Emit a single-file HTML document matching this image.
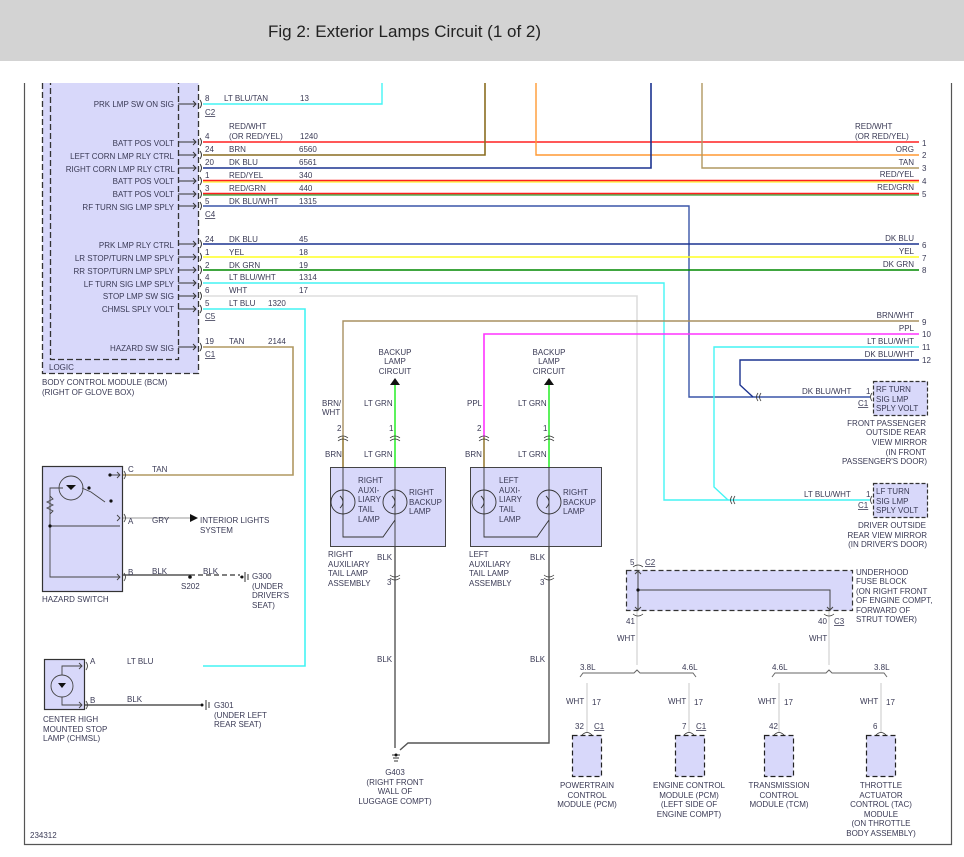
<!DOCTYPE html>
<html><head><meta charset="utf-8"><style>
html,body{margin:0;padding:0;background:#fff;}
svg{display:block;}
text{font-family:"Liberation Sans",sans-serif;font-size:8px;fill:#3a3a55;}
.r{text-anchor:end;}
.m{text-anchor:middle;}
</style></head><body>
<svg width="964" height="857" viewBox="0 0 964 857" xmlns="http://www.w3.org/2000/svg">
<!-- frame -->
<path d="M24.5 83V844.5H951.5V83" fill="none" stroke="#555" stroke-width="1.2"/>
<!-- BCM -->
<rect x="42.5" y="70" width="156" height="303.5" fill="#d8d8fa" stroke="#333" stroke-dasharray="6,3" stroke-width="1.3"/>
<path d="M50.5 70V359.5H178.5V70" fill="none" stroke="#333" stroke-dasharray="6,3" stroke-width="1.3"/>
<text x="49" y="370">LOGIC</text>
<text x="42" y="385">BODY CONTROL MODULE (BCM)</text>
<text x="42" y="395">(RIGHT OF GLOVE BOX)</text>
<g class="r">
<text x="174" y="107" class="r">PRK LMP SW ON SIG</text>
<text x="174" y="146" class="r">BATT POS VOLT</text>
<text x="174" y="159" class="r">LEFT CORN LMP RLY CTRL</text>
<text x="175" y="172" class="r">RIGHT CORN LMP RLY CTRL</text>
<text x="174" y="184" class="r">BATT POS VOLT</text>
<text x="174" y="197" class="r">BATT POS VOLT</text>
<text x="174" y="210" class="r">RF TURN SIG LMP SPLY</text>
<text x="174" y="248" class="r">PRK LMP RLY CTRL</text>
<text x="174" y="261" class="r">LR STOP/TURN LMP SPLY</text>
<text x="174" y="274" class="r">RR STOP/TURN LMP SPLY</text>
<text x="174" y="287" class="r">LF TURN SIG LMP SPLY</text>
<text x="174" y="299" class="r">STOP LMP SW SIG</text>
<text x="174" y="312" class="r">CHMSL SPLY VOLT</text>
<text x="174" y="351" class="r">HAZARD SW SIG</text>
</g>
<!-- pin arrows -->
<g stroke="#333" fill="none" stroke-width="1">
<path d="M178 104h18M193 101l3 3-3 3M200 100q3 4 0 8"/>
<path d="M178 142h18M193 139l3 3-3 3M200 138q3 4 0 8"/>
<path d="M178 155h18M193 152l3 3-3 3M200 151q3 4 0 8"/>
<path d="M178 168h18M193 165l3 3-3 3M200 164q3 4 0 8"/>
<path d="M178 181h18M193 178l3 3-3 3M200 177q3 4 0 8"/>
<path d="M178 194h18M193 191l3 3-3 3M200 190q3 4 0 8"/>
<path d="M178 206h18M193 203l3 3-3 3M200 202q3 4 0 8"/>
<path d="M178 244h18M193 241l3 3-3 3M200 240q3 4 0 8"/>
<path d="M178 257h18M193 254l3 3-3 3M200 253q3 4 0 8"/>
<path d="M178 270h18M193 267l3 3-3 3M200 266q3 4 0 8"/>
<path d="M178 283h18M193 280l3 3-3 3M200 279q3 4 0 8"/>
<path d="M178 296h18M193 293l3 3-3 3M200 292q3 4 0 8"/>
<path d="M178 309h18M193 306l3 3-3 3M200 305q3 4 0 8"/>
<path d="M178 347h18M193 344l3 3-3 3M200 343q3 4 0 8"/>
</g>
<!-- wires -->
<g fill="none" stroke-width="1.4">
<path d="M203 104H382V75" stroke="#44f4f4"/>
<path d="M203 142H919" stroke="#ff2020"/>
<path d="M203 155H485V75" stroke="#8a6d20" stroke-width="1.6"/>
<path d="M536 75V155H919" stroke="#ff9933"/>
<path d="M203 168H651V75" stroke="#1c3390" stroke-width="1.6"/>
<path d="M702 75V168H919" stroke="#b09860"/>
<path d="M203 180.5H919" stroke="#ff2020"/>
<path d="M203 182H919" stroke="#ffee00" stroke-width="1"/>
<path d="M203 193.5H919" stroke="#ff2020"/>
<path d="M203 195H919" stroke="#008800" stroke-width="1"/>
<path d="M203 206H689V397H870" stroke="#3a55a8"/>
<path d="M203 244H919" stroke="#1c3390" stroke-width="1.6"/>
<path d="M203 257H919" stroke="#ffff22"/>
<path d="M203 270H919" stroke="#008800"/>
<path d="M203 283H664V500H870" stroke="#44f4f4"/>
<path d="M203 296H637V570" stroke="#ddd" stroke-width="1.6"/>
<path d="M637 610V665" stroke="#ddd" stroke-width="1.6"/>
<path d="M829 610V665" stroke="#ddd" stroke-width="1.6"/>
<path d="M203 309H305V666H203" stroke="#44f4f4" stroke-width="1.6"/>
<path d="M203 347H293V475H122" stroke="#b09860" stroke-width="1.6"/>
<path d="M343 437V321H919" stroke="#a89060"/>
<path d="M484 437V334H919" stroke="#ff33ff" stroke-width="1.6"/>
<path d="M919 347H714V487L728 500" stroke="#44f4f4"/>
<path d="M919 360H740V385L753 397" stroke="#1c3390"/>
<path d="M343 437V467" stroke="#8a6d20"/>
<path d="M484 437V467" stroke="#8a6d20"/>
<path d="M395 385V467" stroke="#33ee33" stroke-width="1.6"/>
<path d="M549 385V467" stroke="#33ee33" stroke-width="1.6"/>
<path d="M395 546V748M549 546V743H408L400 750" stroke="#555" stroke-width="1.4"/>
<path d="M122 518H190" stroke="#bbb"/>
<path d="M122 575H190" stroke="#555"/>
<path d="M190 575H240" stroke="#555" stroke-dasharray="5,3"/>
<path d="M84 705H200" stroke="#555"/>
<path d="M587 683V733M689 683V733M779 683V733M881 683V733" stroke="#ddd" stroke-width="1.6"/>
</g>
<!-- cover / header -->
<rect x="0" y="61" width="964" height="22" fill="#fff"/>
<rect x="0" y="0" width="964" height="61" fill="#d3d3d3"/>
<text x="268" y="37" style="font-size:17px;fill:#222">Fig 2: Exterior Lamps Circuit (1 of 2)</text>
<!-- right pin numbers and labels -->
<g>
<text x="922" y="146">1</text><text x="922" y="158">2</text><text x="922" y="171">3</text><text x="922" y="184">4</text><text x="922" y="197">5</text>
<text x="922" y="248">6</text><text x="922" y="261">7</text><text x="922" y="273">8</text>
<text x="922" y="325">9</text><text x="922" y="337">10</text><text x="922" y="350">11</text><text x="922" y="363">12</text>
<text x="855" y="129">RED/WHT</text><text x="855" y="139">(OR RED/YEL)</text>
<text x="914" y="152" class="r">ORG</text><text x="914" y="165" class="r">TAN</text>
<text x="914" y="177" class="r">RED/YEL</text><text x="914" y="190" class="r">RED/GRN</text>
<text x="914" y="241" class="r">DK BLU</text><text x="914" y="254" class="r">YEL</text><text x="914" y="267" class="r">DK GRN</text>
<text x="914" y="318" class="r">BRN/WHT</text><text x="914" y="331" class="r">PPL</text>
<text x="914" y="344" class="r">LT BLU/WHT</text><text x="914" y="357" class="r">DK BLU/WHT</text>
</g>
<!-- left wire labels -->
<g>
<text x="205" y="101">8</text><text x="224" y="101">LT BLU/TAN</text><text x="300" y="101">13</text>
<text x="205" y="115" style="text-decoration:underline">C2</text>
<text x="229" y="129">RED/WHT</text><text x="229" y="139">(OR RED/YEL)</text>
<text x="205" y="139">4</text><text x="300" y="139">1240</text>
<text x="205" y="152">24</text><text x="229" y="152">BRN</text><text x="299" y="152">6560</text>
<text x="205" y="165">20</text><text x="229" y="165">DK BLU</text><text x="299" y="165">6561</text>
<text x="205" y="178">1</text><text x="229" y="178">RED/YEL</text><text x="299" y="178">340</text>
<text x="205" y="191">3</text><text x="229" y="191">RED/GRN</text><text x="299" y="191">440</text>
<text x="205" y="204">5</text><text x="229" y="204">DK BLU/WHT</text><text x="299" y="204">1315</text>
<text x="205" y="217" style="text-decoration:underline">C4</text>
<text x="205" y="242">24</text><text x="229" y="242">DK BLU</text><text x="299" y="242">45</text>
<text x="205" y="255">1</text><text x="229" y="255">YEL</text><text x="299" y="255">18</text>
<text x="205" y="268">2</text><text x="229" y="268">DK GRN</text><text x="299" y="268">19</text>
<text x="205" y="280">4</text><text x="229" y="280">LT BLU/WHT</text><text x="299" y="280">1314</text>
<text x="205" y="293">6</text><text x="229" y="293">WHT</text><text x="299" y="293">17</text>
<text x="205" y="306">5</text><text x="229" y="306">LT BLU</text><text x="268" y="306">1320</text>
<text x="205" y="319" style="text-decoration:underline">C5</text>
<text x="205" y="344">19</text><text x="229" y="344">TAN</text><text x="268" y="344">2144</text>
<text x="205" y="357" style="text-decoration:underline">C1</text>
</g>
<!-- backup lamp circuits -->
<g>
<text x="395" y="355" class="m">BACKUP</text><text x="395" y="364" class="m">LAMP</text><text x="395" y="374" class="m">CIRCUIT</text>
<text x="549" y="355" class="m">BACKUP</text><text x="549" y="364" class="m">LAMP</text><text x="549" y="374" class="m">CIRCUIT</text>
</g>
<path d="M390 385L395 378L400 385Z M544 385L549 378L554 385Z" fill="#111"/>
<g>
<text x="322" y="406">BRN/</text><text x="322" y="415">WHT</text><text x="364" y="406">LT GRN</text>
<text x="467" y="406">PPL</text><text x="518" y="406">LT GRN</text>
<text x="337" y="431">2</text><text x="389" y="431">1</text><text x="477" y="431">2</text><text x="543" y="431">1</text>
<text x="325" y="457">BRN</text><text x="364" y="457">LT GRN</text><text x="465" y="457">BRN</text><text x="518" y="457">LT GRN</text>
</g>
<g fill="none" stroke="#333" stroke-width="0.8">
<path d="M338 438q5-4 10 0M338 441q5-4 10 0M390 438q5-4 10 0M390 441q5-4 10 0M479 438q5-4 10 0M479 441q5-4 10 0M544 438q5-4 10 0M544 441q5-4 10 0"/>
<path d="M390 575q5 4 10 0M390 578q5 4 10 0M544 575q5 4 10 0M544 578q5 4 10 0"/>
</g>
<rect x="330.5" y="467.5" width="115" height="79" fill="#d8d8fa" stroke="#444"/>
<rect x="470.5" y="467.5" width="131" height="79" fill="#d8d8fa" stroke="#444"/>
<g fill="none" stroke="#333" stroke-width="0.9">
<path d="M343 467V537H383L395 520M395 467V546"/>
<circle cx="343" cy="502" r="12"/><circle cx="395" cy="502" r="12"/>
<path d="M484 467V537H537L549 520M549 467V546"/>
<circle cx="484" cy="502" r="12"/><circle cx="549" cy="502" r="12"/>
<path d="M340 496q6 6 0 12M392 496q6 6 0 12M481 496q6 6 0 12M546 496q6 6 0 12"/>
</g>
<g>
<text x="358" y="483">RIGHT</text><text x="358" y="493">AUXI-</text><text x="358" y="502">LIARY</text><text x="358" y="512">TAIL</text><text x="358" y="522">LAMP</text>
<text x="409" y="495">RIGHT</text><text x="409" y="505">BACKUP</text><text x="409" y="514">LAMP</text>
<text x="499" y="483">LEFT</text><text x="499" y="493">AUXI-</text><text x="499" y="502">LIARY</text><text x="499" y="512">TAIL</text><text x="499" y="522">LAMP</text>
<text x="563" y="495">RIGHT</text><text x="563" y="505">BACKUP</text><text x="563" y="514">LAMP</text>
<text x="328" y="557">RIGHT</text><text x="328" y="567">AUXILIARY</text><text x="328" y="576">TAIL LAMP</text><text x="328" y="586">ASSEMBLY</text>
<text x="469" y="557">LEFT</text><text x="469" y="567">AUXILIARY</text><text x="469" y="576">TAIL LAMP</text><text x="469" y="586">ASSEMBLY</text>
<text x="377" y="560">BLK</text><text x="530" y="560">BLK</text>
<text x="387" y="585">3</text><text x="540" y="585">3</text>
<text x="377" y="662">BLK</text><text x="530" y="662">BLK</text>
<text x="395" y="775" class="m">G403</text><text x="395" y="785" class="m">(RIGHT FRONT</text><text x="395" y="794" class="m">WALL OF</text><text x="395" y="804" class="m">LUGGAGE COMPT)</text>
</g>
<path d="M392 755h8M393 758h6M394 761h4" stroke="#333" fill="none"/><circle cx="396" cy="755" r="1.5" fill="#111"/>
<!-- mirrors -->
<rect x="873.5" y="381.5" width="54" height="34" fill="#d8d8fa" stroke="#333" stroke-dasharray="4,2" stroke-width="1.2"/>
<rect x="873.5" y="483.5" width="54" height="34" fill="#d8d8fa" stroke="#333" stroke-dasharray="4,2" stroke-width="1.2"/>
<g fill="none" stroke="#333" stroke-width="0.8">
<path d="M758 393q-3 4 0 8M761 393q-3 4 0 8M872 393q-3 4 0 8"/>
<path d="M732 496q-3 4 0 8M735 496q-3 4 0 8M872 496q-3 4 0 8"/>
</g>
<g>
<text x="802" y="394">DK BLU/WHT</text><text x="866" y="394">1</text><text x="858" y="406" style="text-decoration:underline">C1</text>
<text x="876" y="392">RF TURN</text><text x="876" y="402">SIG LMP</text><text x="876" y="411">SPLY VOLT</text>
<text x="926" y="426" class="r">FRONT PASSENGER</text><text x="926" y="435" class="r">OUTSIDE REAR</text><text x="927" y="445" class="r">VIEW MIRROR</text><text x="926" y="455" class="r">(IN FRONT</text><text x="927" y="464" class="r">PASSENGER'S DOOR)</text>
<text x="804" y="497">LT BLU/WHT</text><text x="866" y="497">1</text><text x="858" y="508" style="text-decoration:underline">C1</text>
<text x="876" y="494">LF TURN</text><text x="876" y="504">SIG LMP</text><text x="876" y="513">SPLY VOLT</text>
<text x="926" y="528" class="r">DRIVER OUTSIDE</text><text x="927" y="538" class="r">REAR VIEW MIRROR</text><text x="927" y="547" class="r">(IN DRIVER'S DOOR)</text>
</g>
<!-- fuse block -->
<rect x="626.5" y="570.5" width="226" height="40" fill="#d8d8fa" stroke="#333" stroke-dasharray="5,3" stroke-width="1.2"/>
<path d="M638 570V610M638 590H830V610M635 574l3-3 3 3M635 607l3 3 3-3M827 607l3 3 3-3" fill="none" stroke="#444"/>
<circle cx="638" cy="590" r="1.6" fill="#111"/>
<path d="M633 567q5-4 10 0M633 614q5 4 10 0M824 614q5 4 10 0" fill="none" stroke="#333" stroke-width="0.8"/>
<g>
<text x="630" y="565">5</text><text x="645" y="565" style="text-decoration:underline">C2</text>
<text x="856" y="575">UNDERHOOD</text><text x="856" y="584">FUSE BLOCK</text><text x="856" y="594">(ON RIGHT FRONT</text><text x="856" y="603">OF ENGINE COMPT,</text><text x="856" y="613">FORWARD OF</text><text x="856" y="622">STRUT TOWER)</text>
<text x="626" y="624">41</text><text x="818" y="624">40</text><text x="834" y="624" style="text-decoration:underline">C3</text>
<text x="617" y="641">WHT</text><text x="809" y="641">WHT</text>
</g>
<!-- bracket -->
<path d="M580 677l3-4H634l3-3 3 3H693l3 4M772 677l3-4H826l3-3 3 3H884l3 4" fill="none" stroke="#666"/>
<g>
<text x="580" y="670">3.8L</text><text x="682" y="670">4.6L</text><text x="772" y="670">4.6L</text><text x="874" y="670">3.8L</text>
<text x="566" y="704">WHT</text><text x="592" y="705">17</text>
<text x="668" y="704">WHT</text><text x="694" y="705">17</text>
<text x="758" y="704">WHT</text><text x="784" y="705">17</text>
<text x="860" y="704">WHT</text><text x="886" y="705">17</text>
<text x="575" y="729">32</text><text x="594" y="729" style="text-decoration:underline">C1</text>
<text x="682" y="729">7</text><text x="696" y="729" style="text-decoration:underline">C1</text>
<text x="769" y="729">42</text><text x="873" y="729">6</text>
</g>
<g fill="none" stroke="#333" stroke-width="0.8"><path d="M582 735q5-5 10 0M684 735q5-5 10 0M774 735q5-5 10 0M876 735q5-5 10 0"/></g>
<g fill="#d8d8fa" stroke="#222" stroke-dasharray="5,3" stroke-width="1.2">
<rect x="572.5" y="735.5" width="29" height="41"/><rect x="675.5" y="735.5" width="29" height="41"/>
<rect x="764.5" y="735.5" width="29" height="41"/><rect x="866.5" y="735.5" width="29" height="41"/>
</g>
<g class="m">
<text x="587" y="788" class="m">POWERTRAIN</text><text x="587" y="798" class="m">CONTROL</text><text x="587" y="807" class="m">MODULE (PCM)</text>
<text x="689" y="788" class="m">ENGINE CONTROL</text><text x="689" y="798" class="m">MODULE (PCM)</text><text x="689" y="807" class="m">(LEFT SIDE OF</text><text x="689" y="817" class="m">ENGINE COMPT)</text>
<text x="779" y="788" class="m">TRANSMISSION</text><text x="779" y="798" class="m">CONTROL</text><text x="779" y="807" class="m">MODULE (TCM)</text>
<text x="881" y="788" class="m">THROTTLE</text><text x="881" y="798" class="m">ACTUATOR</text><text x="881" y="807" class="m">CONTROL (TAC)</text><text x="881" y="817" class="m">MODULE</text><text x="881" y="826" class="m">(ON THROTTLE</text><text x="881" y="836" class="m">BODY ASSEMBLY)</text>
</g>
<text x="30" y="838">234312</text>
<!-- hazard switch -->
<rect x="42.5" y="466.5" width="80" height="125" fill="#d8d8fa" stroke="#333" stroke-width="1.2"/>
<g fill="none" stroke="#444" stroke-width="0.9">
<circle cx="71" cy="488" r="12"/>
<path d="M63 488H50V526V577H120M50 526H120M50 496l3 3-6 3 6 3-6 3 6 3-3 3M82 488l9 4 14 10M110 475H120M117 472l3 3-3 3M117 515l3 3-3 3M117 574l3 3-3 3"/>
<path d="M124 471q3 4 0 8M124 514q3 4 0 8M124 573q3 4 0 8"/>
</g>
<circle cx="110" cy="475" r="1.6" fill="#111"/><circle cx="89" cy="488" r="1.6" fill="#111"/><circle cx="111" cy="501" r="1.6" fill="#111"/><circle cx="50" cy="526" r="1.6" fill="#111"/>
<path d="M66 485h10l-5 5z" fill="#111"/>
<g>
<text x="128" y="472">C</text><text x="152" y="472">TAN</text>
<text x="128" y="524">A</text><text x="152" y="523">GRY</text>
<text x="200" y="523">INTERIOR LIGHTS</text><text x="200" y="533">SYSTEM</text>
<text x="128" y="575">B</text><text x="152" y="574">BLK</text><text x="203" y="574">BLK</text>
<text x="181" y="589">S202</text>
<text x="252" y="579">G300</text><text x="252" y="589">(UNDER</text><text x="252" y="598">DRIVER'S</text><text x="252" y="608">SEAT)</text>
<text x="42" y="602">HAZARD SWITCH</text>
</g>
<path d="M190 514l8 4-8 4z" fill="#111"/>
<circle cx="190" cy="577" r="1.8" fill="#111"/>
<path d="M240 577h3M245 572v10M248 574v6" stroke="#333" fill="none"/><circle cx="242" cy="577" r="1.5" fill="#111"/>
<!-- CHMSL -->
<rect x="44.5" y="659.5" width="40" height="50" fill="#d8d8fa" stroke="#333" stroke-width="1.2"/>
<g fill="none" stroke="#444" stroke-width="0.9">
<circle cx="62" cy="686" r="11"/>
<path d="M62 675V666H82M62 697V705H82M79 663l3 3-3 3M79 702l3 3-3 3M86 662q3 4 0 8M86 701q3 4 0 8"/>
</g>
<path d="M58 683h8l-4 5z" fill="#111"/>
<g>
<text x="90" y="664">A</text><text x="127" y="664">LT BLU</text>
<text x="90" y="703">B</text><text x="127" y="702">BLK</text>
<text x="214" y="708">G301</text><text x="214" y="718">(UNDER LEFT</text><text x="214" y="727">REAR SEAT)</text>
<text x="43" y="722">CENTER HIGH</text><text x="43" y="732">MOUNTED STOP</text><text x="43" y="741">LAMP (CHMSL)</text>
</g>
<path d="M200 705h3M206 700v10M209 702v6" stroke="#333" fill="none"/><circle cx="202" cy="705" r="1.5" fill="#111"/>
</svg>
</body></html>
